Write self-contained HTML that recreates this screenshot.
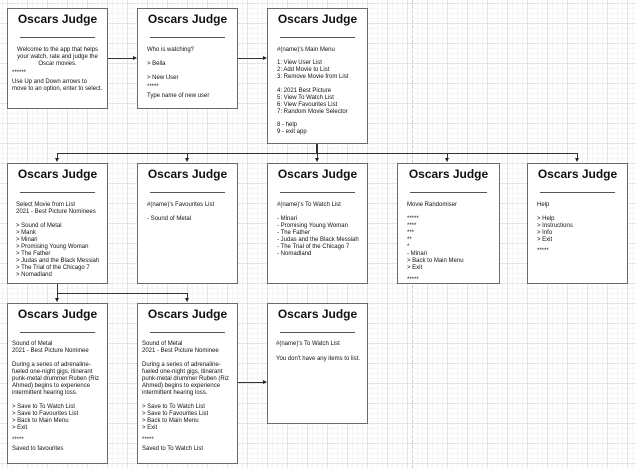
<!DOCTYPE html>
<html><head><meta charset="utf-8"><style>
html,body{margin:0;padding:0}
body{width:636px;height:468px;position:relative;overflow:hidden;background:#fff;
background-image:
linear-gradient(to right,#e4e4e4 1px,transparent 1px),
linear-gradient(to bottom,#e4e4e4 1px,transparent 1px),
linear-gradient(to right,#f5f5f5 1px,transparent 1px),
linear-gradient(to bottom,#f5f5f5 1px,transparent 1px);
background-size:20px 20px,20px 20px,5px 5px,5px 5px;
background-position:7px 3px,7px 3px,2px 3px,2px 3px;
font-family:"Liberation Sans",sans-serif;color:#111}
.dash{position:absolute;left:412px;top:0;width:0;height:468px;border-left:1px dashed #ccc}
.b{position:absolute;background:#fff;border:1.3px solid #6a6a6a;box-sizing:border-box}
.t{position:absolute;left:0;right:0;top:2px;text-align:center;font-weight:bold;font-size:12px;line-height:16px}
.hr{position:absolute;left:12px;right:12px;top:28px;height:0;border-top:1px solid #555}
.x{position:absolute;font-size:6px;line-height:7px;white-space:pre}
.l{position:absolute;background:#333}
.ar{position:absolute;width:0;height:0}
.ad{border-left:2.5px solid transparent;border-right:2.5px solid transparent;border-top:4px solid #222}
.ark{border-top:2.5px solid transparent;border-bottom:2.5px solid transparent;border-left:4px solid #222}
</style></head><body>
<div class="dash"></div>

<div class="l" style="left:107px;top:58px;width:26px;height:1px"></div><div class="ar ark" style="left:133px;top:56px"></div>
<div class="l" style="left:237px;top:58px;width:26px;height:1px"></div><div class="ar ark" style="left:263px;top:56px"></div>
<div class="l" style="left:316px;top:143px;width:1.5px;height:10px"></div>
<div class="l" style="left:57px;top:153px;width:521px;height:1px"></div>
<div class="l" style="left:57px;top:153px;width:1px;height:6px"></div><div class="ar ad" style="left:55px;top:158px"></div>
<div class="l" style="left:187px;top:153px;width:1px;height:6px"></div><div class="ar ad" style="left:185px;top:158px"></div>
<div class="l" style="left:317px;top:153px;width:1px;height:6px"></div><div class="ar ad" style="left:315px;top:158px"></div>
<div class="l" style="left:447px;top:153px;width:1px;height:6px"></div><div class="ar ad" style="left:445px;top:158px"></div>
<div class="l" style="left:577px;top:153px;width:1px;height:6px"></div><div class="ar ad" style="left:575px;top:158px"></div>
<div class="l" style="left:57px;top:283px;width:1px;height:10px"></div>
<div class="l" style="left:57px;top:293px;width:131px;height:1px"></div>
<div class="l" style="left:57px;top:293px;width:1px;height:6px"></div><div class="ar ad" style="left:55px;top:298px"></div>
<div class="l" style="left:187px;top:293px;width:1px;height:6px"></div><div class="ar ad" style="left:185px;top:298px"></div>
<div class="l" style="left:237px;top:382px;width:26px;height:1px"></div><div class="ar ark" style="left:263px;top:380px"></div>

<div class="b" style="left:7px;top:8px;width:101px;height:101px"><div class="t">Oscars Judge</div><div class="hr"></div>
<div class="x" style="left:0;right:0;top:38px;text-align:center">Welcome to the app that helps
your watch, rate and judge the
Oscar movies.</div>
<div class="x" style="left:4px;top:61px">******</div>
<div class="x" style="left:4px;top:70px">Use Up and Down arrows to
move to an option, enter to select.</div></div>

<div class="b" style="left:137px;top:8px;width:101px;height:101px"><div class="t">Oscars Judge</div><div class="hr"></div>
<div class="x" style="left:9px;top:38px">Who is watching?

&gt; Bella

&gt; New User</div>
<div class="x" style="left:9px;top:75px">*****</div>
<div class="x" style="left:9px;top:84px">Type name of new user</div></div>

<div class="b" style="left:267px;top:8px;width:101px;height:136px"><div class="t">Oscars Judge</div><div class="hr"></div>
<div class="x" style="left:9px;top:38px">#(name)'s Main Menu</div>
<div class="x" style="left:9px;top:51px">1: View User List
2: Add Movie to List
3: Remove Movie from List

4: 2021 Best Picture
5: View To Watch List
6: View Favourites List
7: Random Movie Selector</div>
<div class="x" style="left:9px;top:113px">8 - help
9 - exit app</div></div>

<div class="b" style="left:7px;top:163px;width:101px;height:121px"><div class="t">Oscars Judge</div><div class="hr"></div>
<div class="x" style="left:8px;top:38px">Select Movie from List
2021 - Best Picture Nominees

&gt; Sound of Metal
&gt; Mank
&gt; Minari
&gt; Promising Young Woman
&gt; The Father
&gt; Judas and the Black Messiah
&gt; The Trial of the Chicago 7
&gt; Nomadland</div></div>

<div class="b" style="left:137px;top:163px;width:101px;height:121px"><div class="t">Oscars Judge</div><div class="hr"></div>
<div class="x" style="left:9px;top:38px">#(name)'s Favourites List

- Sound of Metal</div></div>

<div class="b" style="left:267px;top:163px;width:101px;height:121px"><div class="t">Oscars Judge</div><div class="hr"></div>
<div class="x" style="left:9px;top:38px">#(name)'s To Watch List

- Minari
- Promising Young Woman
- The Father
- Judas and the Black Messiah
- The Trial of the Chicago 7
- Nomadland</div></div>

<div class="b" style="left:397px;top:163px;width:103px;height:121px"><div class="t">Oscars Judge</div><div class="hr"></div>
<div class="x" style="left:9px;top:38px">Movie Randomiser

*****
****
***
**
*
- Minari
&gt; Back to Main Menu
&gt; Exit</div>
<div class="x" style="left:9px;top:113px">*****</div></div>

<div class="b" style="left:527px;top:163px;width:101px;height:121px"><div class="t">Oscars Judge</div><div class="hr"></div>
<div class="x" style="left:9px;top:38px">Help

&gt; Help
&gt; Instructions
&gt; Info
&gt; Exit</div>
<div class="x" style="left:9px;top:84px">*****</div></div>

<div class="b" style="left:7px;top:303px;width:101px;height:161px"><div class="t">Oscars Judge</div><div class="hr"></div>
<div class="x" style="left:4px;top:37px">Sound of Metal
2021 - Best Picture Nominee

During a series of adrenaline-
fueled one-night gigs, itinerant
punk-metal drummer Ruben (Riz
Ahmed) begins to experience
intermittent hearing loss.

&gt; Save to To Watch List
&gt; Save to Favourites List
&gt; Back to Main Menu
&gt; Exit</div>
<div class="x" style="left:4px;top:133px">*****</div>
<div class="x" style="left:4px;top:142px">Saved to favourites</div></div>

<div class="b" style="left:137px;top:303px;width:101px;height:161px"><div class="t">Oscars Judge</div><div class="hr"></div>
<div class="x" style="left:4px;top:37px">Sound of Metal
2021 - Best Picture Nominee

During a series of adrenaline-
fueled one-night gigs, itinerant
punk-metal drummer Ruben (Riz
Ahmed) begins to experience
intermittent hearing loss.

&gt; Save to To Watch List
&gt; Save to Favourites List
&gt; Back to Main Menu
&gt; Exit</div>
<div class="x" style="left:4px;top:133px">*****</div>
<div class="x" style="left:4px;top:142px">Saved to To Watch List</div></div>

<div class="b" style="left:267px;top:303px;width:101px;height:121px"><div class="t">Oscars Judge</div><div class="hr"></div>
<div class="x" style="left:8px;top:37px">#(name)'s To Watch List</div>
<div class="x" style="left:8px;top:52px">You don't have any items to list.</div></div>
</body></html>
